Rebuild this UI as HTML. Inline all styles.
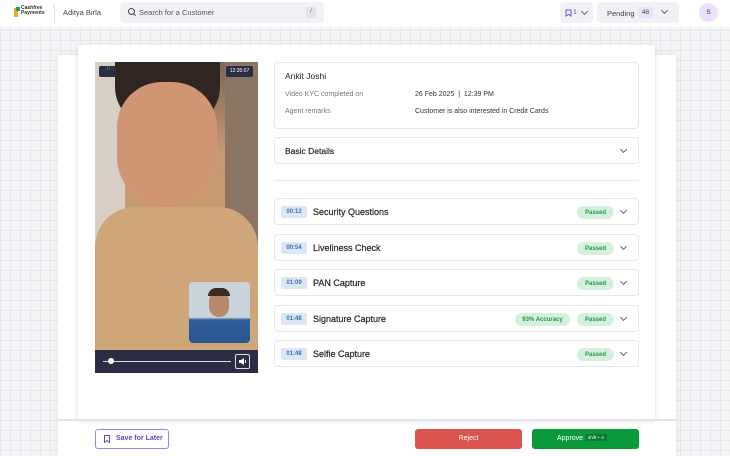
<!DOCTYPE html>
<html><head><style>
*{box-sizing:border-box;margin:0;padding:0}
body{width:730px;height:456px;overflow:hidden;font-family:"Liberation Sans",sans-serif;background-color:#f4f5f7;background-image:linear-gradient(#e6e7ea 1px,transparent 1px),linear-gradient(90deg,#e6e7ea 1px,transparent 1px);background-size:10px 10px;position:relative;color:#222}
.hdr{position:absolute;left:0;top:0;width:730px;height:27px;background:#fff}
.abs{position:absolute}
.card{position:absolute;background:#fff}
.row{position:absolute;left:274px;width:365px;height:27px;border:1px solid #e6e7ea;border-radius:4px;background:#fff}
.row .t{position:absolute;left:6px;top:7px;width:26px;height:12px;background:#dbe7f5;color:#3b6fb6;font-size:6px;font-weight:bold;display:flex;align-items:center;justify-content:center;border-radius:2px}
.row .n{position:absolute;left:38px;top:8px;font-size:9px;color:#2a2a2a;-webkit-text-stroke:0.25px #2a2a2a}
.pill{position:absolute;top:7px;height:13px;background:#d5f0dd;color:#1f9a47;font-size:6px;font-weight:bold;display:flex;align-items:center;justify-content:center;border-radius:7px}
.chev{position:absolute;right:12px;top:9px;width:5px;height:5px;border-right:1px solid #666;border-bottom:1px solid #666;transform:rotate(45deg)}
</style></head><body>
<div class="hdr">
 <div class="abs" style="left:14px;top:8px;width:4px;height:9px;background:#f5a623"></div>
 <div class="abs" style="left:16px;top:7px;width:4px;height:4px;background:#1aa260"></div>
 <div class="abs" style="left:21px;top:6px;font-size:5px;font-weight:bold;line-height:5px;color:#333">Cashfree<br>Payments</div>
 <div class="abs" style="left:54px;top:4px;width:1px;height:18px;background:#ddd"></div>
 <div class="abs" style="left:63px;top:8px;font-size:7.5px;color:#444">Aditya Birla</div>
 <div class="abs" style="left:120px;top:2px;width:204px;height:21px;background:#f1f2f5;border-radius:4px">
  <div class="abs" style="left:8px;top:6px;width:7px;height:7px;border:1.2px solid #444;border-radius:50%"></div>
  <div class="abs" style="left:13px;top:12px;width:3px;height:1.2px;background:#444;transform:rotate(45deg)"></div>
  <div class="abs" style="left:19px;top:6px;font-size:7.5px;color:#555">Search for a Customer</div>
  <div class="abs" style="left:186px;top:5px;width:10px;height:11px;background:#e3e4e8;border-radius:2px;font-size:6px;text-align:center;line-height:11px;color:#666">/</div>
 </div>
 <div class="abs" style="left:560px;top:2px;width:33px;height:21px;background:#f1f2f5;border-radius:4px">
  <svg class="abs" style="left:5px;top:7px" width="7" height="8" viewBox="0 0 7 8"><path d="M1 1h5v6L3.5 5.3 1 7z" fill="none" stroke="#7a4fd6" stroke-width="1"/></svg>
  <div class="abs" style="left:13px;top:7px;font-size:7px;color:#7a4fd6">1</div>
  <div class="abs" style="left:22px;top:7px;width:5px;height:5px;border-right:1px solid #666;border-bottom:1px solid #666;transform:rotate(45deg)"></div>
 </div>
 <div class="abs" style="left:597px;top:2px;width:82px;height:21px;background:#f1f2f5;border-radius:4px">
  <div class="abs" style="left:10px;top:7px;font-size:7.5px;color:#444">Pending</div>
  <div class="abs" style="left:41px;top:5px;width:15px;height:11px;background:#ebe3fb;border-radius:2px;font-size:6.5px;text-align:center;line-height:11px;color:#444">48</div>
  <div class="abs" style="left:65px;top:6px;width:5px;height:5px;border-right:1px solid #666;border-bottom:1px solid #666;transform:rotate(45deg)"></div>
 </div>
 <div class="abs" style="left:699px;top:3px;width:19px;height:19px;border-radius:50%;background:#ebe1fb;font-size:6.5px;text-align:center;line-height:19px;color:#333">S</div>
</div>
<div class="card" style="left:58px;top:55px;width:618px;height:401px;box-shadow:0 0 6px rgba(0,0,0,.08)"></div>
<div class="card" style="left:78px;top:45px;width:577px;height:375px;box-shadow:0 1px 6px rgba(0,0,0,.12);border-radius:3px"></div>
<!-- video -->
<div class="abs" style="left:95px;top:62px;width:163px;height:311px;overflow:hidden;background:linear-gradient(180deg,#7a6658 0%,#c99a73 30%,#c89c6f 55%,#c9a67c 80%,#a58a66 100%)">
 <div class="abs" style="left:0;top:0;width:30px;height:240px;background:#d6cfc4"></div>
 <div class="abs" style="left:130px;top:0;width:33px;height:200px;background:#8a7464"></div>
 <div class="abs" style="left:20px;top:-5px;width:105px;height:70px;background:#2f2622;border-radius:0 0 40px 40px"></div>
 <div class="abs" style="left:22px;top:20px;width:100px;height:125px;background:#d09673;border-radius:45px 45px 50px 50px"></div>
 <div class="abs" style="left:128px;top:190px;width:40px;height:70px;background:#d4a07e;border-radius:20px 0 0 20px;transform:rotate(-20deg)"></div>
 <div class="abs" style="left:0;top:145px;width:163px;height:166px;background:#cfa679;border-radius:40px 40px 0 0"></div>
 <div class="abs" style="left:4px;top:4px;width:17px;height:11px;background:#2b2d45;border-radius:2px;color:#2bb14c;font-size:6px;text-align:center">.ıl</div>
 <div class="abs" style="left:131px;top:4px;width:27px;height:11px;background:#2b2d45;border-radius:2px;color:#fff;font-size:5px;text-align:center;line-height:11px">12:35:07</div>
 <div class="abs" style="left:94px;top:220px;width:61px;height:61px;border-radius:4px;overflow:hidden;background:linear-gradient(180deg,#c9d3da 0%,#c9d3da 58%,#2f5e9a 62%,#2a5590 100%)">
  <div class="abs" style="left:20px;top:9px;width:20px;height:26px;border-radius:10px;background:#b8886a"></div>
  <div class="abs" style="left:19px;top:6px;width:22px;height:8px;border-radius:10px 10px 0 0;background:#3a2c24"></div>
 </div>
 <div class="abs" style="left:0;top:288px;width:163px;height:23px;background:#2b2d45">
  <div class="abs" style="left:8px;top:11px;width:128px;height:1px;background:#ddd"></div>
  <div class="abs" style="left:13px;top:8px;width:6px;height:6px;border-radius:50%;background:#fff"></div>
  <div class="abs" style="left:140px;top:4px;width:15px;height:15px;border:1px solid #ddd;border-radius:2px"></div>
  <svg class="abs" style="left:143px;top:7px" width="9" height="9" viewBox="0 0 9 9"><path d="M1 3h2l3-2v7L3 6H1z" fill="#fff"/><path d="M7.5 3v3" stroke="#fff" stroke-width="1"/></svg>
 </div>
</div>
<!-- info -->
<div class="abs" style="left:274px;top:62px;width:365px;height:67px;border:1px solid #e6e7ea;border-radius:4px">
 <div class="abs" style="left:10px;top:8px;font-size:8.5px;color:#222">Ankit Joshi</div>
 <div class="abs" style="left:10px;top:28px;font-size:7px;color:#777">Video KYC completed on</div>
 <div class="abs" style="left:140px;top:28px;font-size:7px;color:#333">26 Feb 2025 &nbsp;|&nbsp; 12:39 PM</div>
 <div class="abs" style="left:10px;top:45px;font-size:7px;color:#777">Agent remarks</div>
 <div class="abs" style="left:140px;top:45px;font-size:7px;color:#333">Customer is also interested in Credit Cards</div>
</div>
<div class="abs" style="left:274px;top:137px;width:365px;height:27px;border:1px solid #e6e7ea;border-radius:4px">
 <div class="abs" style="left:10px;top:8px;font-size:8.5px;color:#333;-webkit-text-stroke:0.25px #333">Basic Details</div><div class="chev"></div>
</div>
<div class="abs" style="left:274px;top:180px;width:365px;height:1px;background:#e6e7ea"></div>
<div class="row" style="top:198px"><div class="t">00:12</div><div class="n">Security Questions</div><div class="pill" style="left:302px;width:37px">Passed</div><div class="chev"></div></div>
<div class="row" style="top:234px"><div class="t">00:54</div><div class="n">Liveliness Check</div><div class="pill" style="left:302px;width:37px">Passed</div><div class="chev"></div></div>
<div class="row" style="top:269px"><div class="t">01:09</div><div class="n">PAN Capture</div><div class="pill" style="left:302px;width:37px">Passed</div><div class="chev"></div></div>
<div class="row" style="top:305px"><div class="t">01:48</div><div class="n">Signature Capture</div><div class="pill" style="left:240px;width:55px">93% Accuracy</div><div class="pill" style="left:302px;width:37px">Passed</div><div class="chev"></div></div>
<div class="row" style="top:340px"><div class="t">01:48</div><div class="n">Selfie Capture</div><div class="pill" style="left:302px;width:37px">Passed</div><div class="chev"></div></div>
<!-- footer -->
<div class="abs" style="left:58px;top:419px;width:618px;height:2px;background:#e4e5ea"></div>
<div class="abs" style="left:95px;top:429px;width:74px;height:20px;border:1px solid #a77ee8;border-radius:3px;color:#6b3fd0;font-size:7px;font-weight:bold;line-height:18px;padding-left:20px">Save for Later
 <svg class="abs" style="left:8px;top:5px" width="6" height="8" viewBox="0 0 6 8"><path d="M.5.5h5v7L3 5.5.5 7.5z" fill="none" stroke="#6b3fd0" stroke-width="1"/></svg></div>
<div class="abs" style="left:415px;top:429px;width:107px;height:20px;background:#d9534f;border-radius:3px;color:#fff;font-size:7px;text-align:center;line-height:20px">Reject</div>
<div class="abs" style="left:532px;top:429px;width:107px;height:20px;background:#0a9a3b;border-radius:3px;color:#fff;font-size:7px;line-height:20px;padding-left:25px">Approve <span style="display:inline-block;background:#0c7c32;font-size:4.5px;line-height:7px;padding:0 3px;vertical-align:1px">shift + A</span></div>
</body></html>
